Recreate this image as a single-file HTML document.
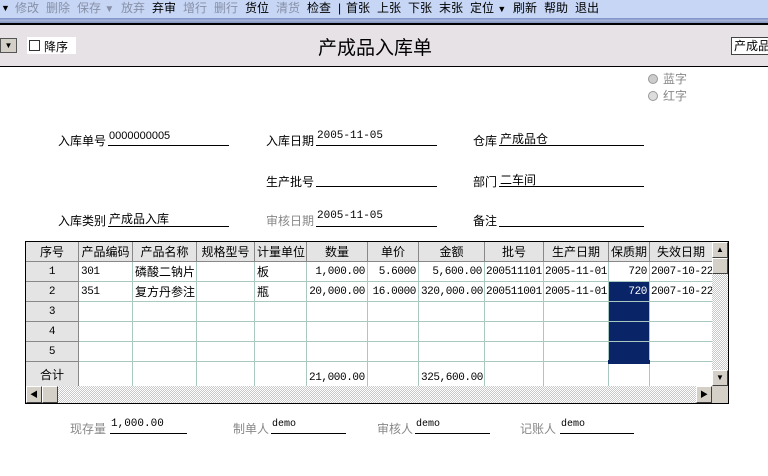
<!DOCTYPE html>
<html><head><meta charset="utf-8"><style>
*{margin:0;padding:0;box-sizing:border-box}
body{width:768px;height:476px;overflow:hidden;background:#fff;position:relative;font-family:"Liberation Sans","WenQuanYi Zen Hei","Noto Sans CJK SC",sans-serif;font-size:12px;color:#000}
.a{position:absolute;white-space:nowrap}
#tb{position:absolute;left:0;top:0;width:768px;height:18px;background:#c6d6f4}
#tb span{position:absolute;top:1px;font-size:12px;line-height:14px}
.g{color:#8890a8}
#gr{position:absolute;left:0;top:18px;width:768px;height:5px;background:linear-gradient(#7a90c8,#a8b4d8,#8090b8)}
#bl{position:absolute;left:0;top:23px;width:768px;height:2px;background:#000}
#hd{position:absolute;left:0;top:25px;width:768px;height:42px;background:#e6e2e6;border-bottom:1px solid #000}
.ln{position:absolute;height:1px;background:#000}
.lab{position:absolute;font-size:12px}
#wrap{position:absolute;left:26px;top:242px;width:686px;height:144px;overflow:hidden}
table{border-collapse:collapse;table-layout:fixed;width:687px;margin-left:-1px;margin-top:-1px;font-size:12px}
td{border:1px solid #a8c8c0;height:20px;padding:0 2px;white-space:nowrap;overflow:hidden;font-family:"Liberation Mono","WenQuanYi Zen Hei",monospace;font-size:11px;letter-spacing:-0.4px}
tr.h td{background:#e4e4e4;border-color:#888;text-align:center;font-family:"Liberation Sans","WenQuanYi Zen Hei",sans-serif;font-size:12px;letter-spacing:0}
td.c{font-family:"Liberation Sans","WenQuanYi Zen Hei",sans-serif;font-size:12px;letter-spacing:0}
td.n{background:#e4e4e4;border-color:#888;text-align:center}
td.r{text-align:right}
td.s{background:#0a2468;color:#fff}
</style></head><body>
<div id="tb">
<span style="left:1px;font-size:9px">▼</span>
<span class="g" style="left:15px">修改</span>
<span class="g" style="left:46px">删除</span>
<span class="g" style="left:77px">保存 <small>▼</small></span>
<span class="g" style="left:121px">放弃</span>
<span style="left:152px">弃审</span>
<span class="g" style="left:183px">增行</span>
<span class="g" style="left:214px">删行</span>
<span style="left:245px">货位</span>
<span class="g" style="left:276px">清货</span>
<span style="left:307px">检查</span>
<span style="left:338px">|</span>
<span style="left:346px">首张</span>
<span style="left:377px">上张</span>
<span style="left:408px">下张</span>
<span style="left:439px">末张</span>
<span style="left:470px">定位 <small style="font-size:9px">▼</small></span>
<span style="left:513px">刷新</span>
<span style="left:544px">帮助</span>
<span style="left:575px">退出</span>
</div>
<div id="gr"></div><div id="bl"></div>
<div id="hd">
<div class="a" style="left:0;top:13px;width:17px;height:15px;background:#d4d0c8;border:1px solid #555;font-size:8px;text-align:center;line-height:13px">▼</div>
<div class="a" style="left:27px;top:12px;width:49px;height:17px;background:#fff"></div>
<div class="a" style="left:29px;top:15px;width:11px;height:11px;border:1px solid #333;background:#fff"></div>
<div class="a" style="left:44px;top:13px">降序</div>
<div class="a" style="left:318px;top:8px;font-size:19px">产成品入库单</div>
<div class="a" style="left:731px;top:12px;width:40px;height:18px;background:#fff;border:1px solid #444;padding-left:2px;line-height:16px">产成品</div>
</div>
<div class="a" style="left:648px;top:70px;color:#888"><span style="display:inline-block;width:10px;height:10px;border-radius:50%;background:#ccc;border:1px solid #999;vertical-align:-1px;margin-right:5px"></span>蓝字</div>
<div class="a" style="left:648px;top:87px;color:#888"><span style="display:inline-block;width:10px;height:10px;border-radius:50%;background:#ddd;border:1px solid #999;vertical-align:-1px;margin-right:5px"></span>红字</div>

<div class="lab" style="left:58px;top:132px">入库单号</div><div class="a" style="left:109px;top:130px;font-size:11px">0000000005</div><div class="ln" style="left:108px;top:145px;width:121px"></div>
<div class="lab" style="left:266px;top:132px">入库日期</div><div class="a" style="left:317px;top:130px;font-size:11px;font-family:'Liberation Mono',monospace">2005-11-05</div><div class="ln" style="left:316px;top:145px;width:121px"></div>
<div class="lab" style="left:473px;top:132px">仓库</div><div class="a" style="left:500px;top:130px">产成品仓</div><div class="ln" style="left:499px;top:145px;width:145px"></div>
<div class="lab" style="left:266px;top:173px">生产批号</div><div class="ln" style="left:316px;top:186px;width:121px"></div>
<div class="lab" style="left:473px;top:173px">部门</div><div class="a" style="left:500px;top:171px">二车间</div><div class="ln" style="left:499px;top:186px;width:145px"></div>
<div class="lab" style="left:58px;top:212px">入库类别</div><div class="a" style="left:109px;top:210px">产成品入库</div><div class="ln" style="left:108px;top:226px;width:121px"></div>
<div class="lab" style="left:266px;top:212px;color:#888">审核日期</div><div class="a" style="left:317px;top:210px;font-size:11px;font-family:'Liberation Mono',monospace">2005-11-05</div><div class="ln" style="left:316px;top:226px;width:121px"></div>
<div class="lab" style="left:473px;top:212px">备注</div><div class="ln" style="left:499px;top:226px;width:145px"></div>

<div class="a" style="left:25px;top:241px;width:704px;height:163px;border:1px solid #000;background:#fff"></div>
<div id="wrap">
<table>
<colgroup><col style="width:53px"><col style="width:54px"><col style="width:64px"><col style="width:58px"><col style="width:52px"><col style="width:61px"><col style="width:51px"><col style="width:66px"><col style="width:59px"><col style="width:65px"><col style="width:41px"><col style="width:63px"></colgroup>
<tr class="h"><td>序号</td><td>产品编码</td><td>产品名称</td><td>规格型号</td><td>计量单位</td><td>数量</td><td>单价</td><td>金额</td><td>批号</td><td>生产日期</td><td>保质期</td><td>失效日期</td></tr>
<tr><td class="n">1</td><td>301</td><td class="c">磷酸二钠片</td><td></td><td class="c">板</td><td class="r">1,000.00</td><td class="r">5.6000</td><td class="r">5,600.00</td><td style="padding:0 1px">200511101</td><td style="padding:0 1px">2005-11-01</td><td class="r">720</td><td style="padding:0 1px">2007-10-22</td></tr>
<tr><td class="n">2</td><td>351</td><td class="c">复方丹参注</td><td></td><td class="c">瓶</td><td class="r">20,000.00</td><td class="r">16.0000</td><td class="r" style="padding:0 1px">320,000.00</td><td style="padding:0 1px">200511001</td><td style="padding:0 1px">2005-11-01</td><td class="r s">720</td><td style="padding:0 1px">2007-10-22</td></tr>
<tr><td class="n">3</td><td></td><td></td><td></td><td></td><td></td><td></td><td></td><td></td><td></td><td class="s"></td><td></td></tr>
<tr><td class="n">4</td><td></td><td></td><td></td><td></td><td></td><td></td><td></td><td></td><td></td><td class="s"></td><td></td></tr>
<tr><td class="n">5</td><td></td><td></td><td></td><td></td><td></td><td></td><td></td><td></td><td></td><td class="s"></td><td></td></tr>
<tr><td class="n c" style="height:25px">合计</td><td></td><td></td><td></td><td></td><td style="vertical-align:bottom;padding-bottom:2px">21,000.00</td><td></td><td style="vertical-align:bottom;padding-bottom:2px">325,600.00</td><td></td><td></td><td style="border-top:4px solid #0a2468"></td><td></td></tr>
</table>
</div>
<!-- vertical scrollbar -->
<div class="a" style="left:712px;top:242px;width:16px;height:144px;background:repeating-conic-gradient(#c8c8c8 0 25%,#fff 0 50%) 0 0/2px 2px"></div>
<div class="a" style="left:712px;top:242px;width:16px;height:16px;background:#d4d0c8;border:1px solid;border-color:#fff #404040 #404040 #fff;font-size:8px;text-align:center;line-height:14px">▲</div>
<div class="a" style="left:712px;top:258px;width:16px;height:16px;background:#d4d0c8;border:1px solid;border-color:#fff #404040 #404040 #fff"></div>
<div class="a" style="left:712px;top:370px;width:16px;height:16px;background:#d4d0c8;border:1px solid;border-color:#fff #404040 #404040 #fff;font-size:8px;text-align:center;line-height:14px">▼</div>
<!-- horizontal scrollbar -->
<div class="a" style="left:26px;top:386px;width:702px;height:17px;background:repeating-conic-gradient(#c8c8c8 0 25%,#fff 0 50%) 0 0/2px 2px"></div>
<div class="a" style="left:26px;top:386px;width:16px;height:17px;background:#d4d0c8;border:1px solid;border-color:#fff #404040 #404040 #fff;font-size:8px;text-align:center;line-height:15px">◀</div>
<div class="a" style="left:42px;top:386px;width:16px;height:17px;background:#d4d0c8;border:1px solid;border-color:#fff #404040 #404040 #fff"></div>
<div class="a" style="left:696px;top:386px;width:16px;height:17px;background:#d4d0c8;border:1px solid;border-color:#fff #404040 #404040 #fff;font-size:8px;text-align:center;line-height:15px">▶</div>
<div class="a" style="left:712px;top:386px;width:16px;height:17px;background:#d4d0c8"></div>

<div class="lab" style="left:70px;top:420px;color:#888">现存量</div><div class="a" style="left:111px;top:418px;font-size:11px;font-family:'Liberation Mono',monospace">1,000.00</div><div class="ln" style="left:110px;top:433px;width:77px"></div>
<div class="lab" style="left:233px;top:420px;color:#888">制单人</div><div class="a" style="left:272px;top:419px;font-size:10px;font-family:'Liberation Mono',monospace">demo</div><div class="ln" style="left:271px;top:433px;width:75px"></div>
<div class="lab" style="left:377px;top:420px;color:#888">审核人</div><div class="a" style="left:416px;top:419px;font-size:10px;font-family:'Liberation Mono',monospace">demo</div><div class="ln" style="left:415px;top:433px;width:75px"></div>
<div class="lab" style="left:520px;top:420px;color:#888">记账人</div><div class="a" style="left:561px;top:419px;font-size:10px;font-family:'Liberation Mono',monospace">demo</div><div class="ln" style="left:560px;top:433px;width:74px"></div>
</body></html>
